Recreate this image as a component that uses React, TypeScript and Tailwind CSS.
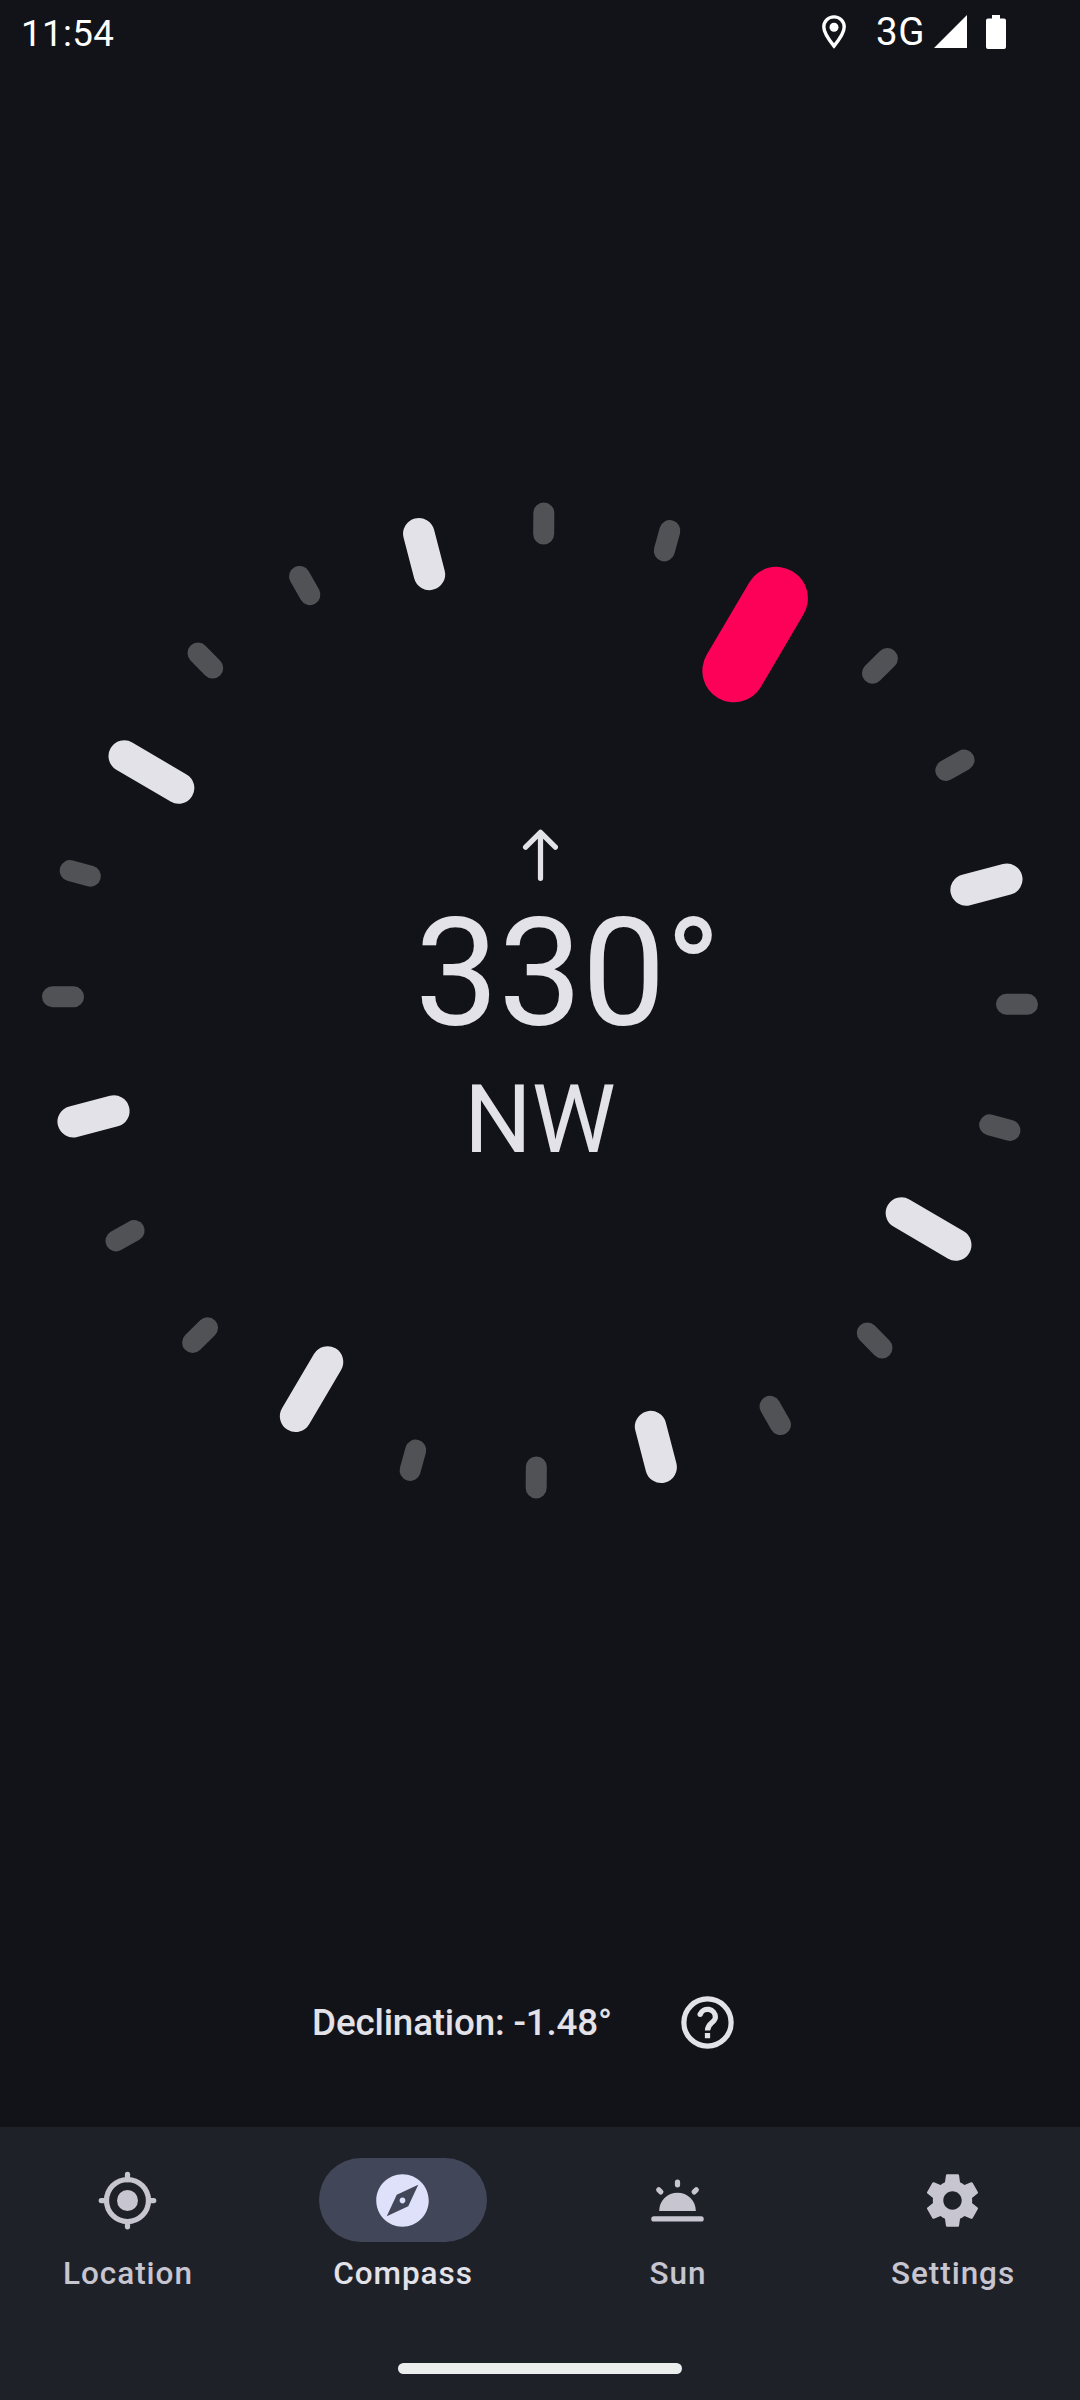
import type { ReactNode } from "react";

// 24 marks around the dial, every third one is a compass point
const HEADING_OFFSET = 30.45;
const marks = Array.from({ length: 24 }, (_, i) => {
  const angle = HEADING_OFFSET + i * 15;
  if (i === 0) return { angle, width: 63, height: 147, fill: "#fd0058" };
  if (i % 6 === 0) return { angle, width: 31.5, height: 94.5, fill: "#e3e2e9" };
  if (i % 3 === 0) return { angle, width: 31.5, height: 73.5, fill: "#e3e2e9" };
  return { angle, width: 21, height: 42, fill: "#515256" };
});

const tabs: { label: string; icon: ReactNode; active?: boolean }[] = [
  {
    label: "Location",
    icon: (
      <>
        <circle cx="12" cy="12" r="4" />
        <circle cx="12" cy="12" r="8" fill="none" stroke="currentColor" strokeWidth="2" />
        <path
          d="M12 2v2M12 20v2M2 12h2M20 12h2"
          stroke="currentColor"
          strokeWidth="2"
          strokeLinecap="round"
        />
      </>
    ),
  },
  {
    label: "Compass",
    active: true,
    icon: (
      <path d="M12 10.9c-.61 0-1.1.49-1.1 1.1s.49 1.1 1.1 1.1c.61 0 1.1-.49 1.1-1.1s-.49-1.1-1.1-1.1zM12 2C6.48 2 2 6.48 2 12s4.48 10 10 10 10-4.48 10-10S17.52 2 12 2zm2.19 12.19L6 18l3.81-8.19L18 6l-3.81 8.19z" />
    ),
  },
  {
    label: "Sun",
    icon: (
      <>
        <path d="M5 16a7 7 0 0 1 14 0z" />
        <path
          d="M3 19h18M12 5v1M4.85 7.95l.8.8M19.15 7.95l-.8.8"
          stroke="currentColor"
          strokeWidth="2"
          strokeLinecap="round"
        />
      </>
    ),
  },
  {
    label: "Settings",
    icon: (
      <path d="M19.43 12.98c.04-.32.07-.64.07-.98s-.03-.66-.07-.98l2.11-1.65c.19-.15.24-.42.12-.64l-2-3.46c-.12-.22-.39-.3-.61-.22l-2.49 1c-.52-.4-1.08-.73-1.69-.98l-.38-2.65C14.46 2.18 14.25 2 14 2h-4c-.25 0-.46.18-.49.42l-.38 2.65c-.61.25-1.17.59-1.69.98l-2.49-1c-.23-.09-.49 0-.61.22l-2 3.46c-.13.22-.07.49.12.64l2.11 1.65c-.04.32-.07.65-.07.98s.03.66.07.98l-2.11 1.65c-.19.15-.24.42-.12.64l2 3.46c.12.22.39.3.61.22l2.49-1c.52.4 1.08.73 1.69.98l.38 2.65c.03.24.24.42.49.42h4c.25 0 .46-.18.49-.42l.38-2.65c.61-.25 1.17-.59 1.69-.98l2.49 1c.23.09.49 0 .61-.22l2-3.46c.12-.22.07-.49-.12-.64l-2.11-1.65zM12 15.5c-1.93 0-3.5-1.57-3.5-3.5s1.57-3.5 3.5-3.5 3.5 1.57 3.5 3.5-1.57 3.5-3.5 3.5z" />
    ),
  },
];

function StatusBar() {
  return (
    <header className="flex h-[63px] items-center justify-between pl-[21px] pr-[74px] text-white">
      <span className="pt-[3px] text-[36.75px] leading-[43px] tracking-[0.35px]">11:54</span>
      <div className="flex items-center">
        <svg className="mr-[29px] h-[34px] w-[26px]" viewBox="0 0 26 34">
          <path
            d="M13 1.9c6 0 10.2 4.6 10.2 10.2 0 5.2-3.6 11-10.2 19-6.6-8-10.2-13.8-10.2-19C2.8 6.5 7 1.9 13 1.9z"
            fill="none"
            stroke="currentColor"
            strokeWidth="3.4"
          />
          <circle cx="13" cy="12.3" r="4.5" fill="currentColor" />
        </svg>
        <span className="text-[38.5px] leading-[43px] tracking-[0.6px]">3G</span>
        <svg className="ml-[9px] h-[33px] w-[33px]" viewBox="0 0 33 33" fill="currentColor">
          <path d="M33 0v33H0z" />
        </svg>
        <svg className="ml-[19px] h-[34px] w-[20px]" viewBox="0 0 20 34" fill="currentColor">
          <path d="M6 0h8v3.5h4a2 2 0 0 1 2 2V32a2 2 0 0 1-2 2H2a2 2 0 0 1-2-2V5.500a2 2 0 0 1 2-2h4z" />
        </svg>
      </div>
    </header>
  );
}

function Dial() {
  return (
    <div className="grid h-[996px] w-[996px] place-items-center">
      <svg
        className="col-start-1 row-start-1 h-[996px] w-[996px] overflow-visible"
        viewBox="-498 -498.5 996 996"
      >
        {marks.map((m) => (
          <rect
            key={m.angle}
            x={-m.width / 2}
            y={-498}
            width={m.width}
            height={m.height}
            rx={m.width / 2}
            fill={m.fill}
            transform={`rotate(${m.angle})`}
          />
        ))}
      </svg>
      <div className="col-start-1 row-start-1 flex translate-y-[3px] flex-col items-center text-[#e3e2e9]">
        <svg
          className="h-[52px] w-[36px]"
          viewBox="0 0 36 52"
          fill="none"
          stroke="currentColor"
          strokeWidth="5.25"
          strokeLinecap="round"
          strokeLinejoin="round"
        >
          <path d="M18.5 49.3V3.500M3.600 18.200L18.5 3.300l14.900 14.900" />
        </svg>
        <div className="relative mt-[9px] text-[149.6px] leading-[168px] tracking-[-0.5px]">
          330
          <span className="absolute left-full top-0">°</span>
        </div>
        <div className="mt-1 text-[94.5px] leading-[116px]">NW</div>
      </div>
    </div>
  );
}

function BottomNav() {
  return (
    <nav className="flex h-[273px] flex-col items-center bg-[#1f2129]">
      <div className="flex w-full gap-[21px] pl-px pt-[31px]">
        {tabs.map((tab) => (
          <button
            key={tab.label}
            className={
              tab.active
                ? "flex flex-1 flex-col items-center text-[#e3e2e9]"
                : "flex flex-1 flex-col items-center text-[#c6c5d0]"
            }
          >
            <span
              className={
                tab.active
                  ? "grid h-[84px] w-[168px] place-items-center rounded-full bg-[#424659] pr-[2px] text-[#dee1f9]"
                  : "grid h-[84px] w-[168px] place-items-center rounded-full pr-[2px]"
              }
            >
              <svg className="h-[63px] w-[63px]" viewBox="0 0 24 24" fill="currentColor">
                {tab.icon}
              </svg>
            </span>
            <span className="mt-[11px] text-[31.5px] font-medium leading-[42px] tracking-[0.95px]">
              {tab.label}
            </span>
          </button>
        ))}
      </div>
      <div className="mb-[26px] mt-auto h-[11px] w-[284px] rounded-full bg-[#eceeed]" />
    </nav>
  );
}

export default function App() {
  return (
    <div className="flex h-[2400px] w-[1080px] flex-col overflow-hidden bg-[#121318] font-['Roboto',sans-serif]">
      <StatusBar />
      <main className="flex flex-1 flex-col items-center">
        <div className="mt-[439px]">
          <Dial />
        </div>
        <div className="mb-[73px] mt-auto flex items-center gap-[64px] pr-[29px]">
          <span className="text-[36.75px] font-medium leading-[52px] tracking-[-0.17px] text-[#e3e2e9]">
            Declination: -1.48°
          </span>
          <svg
            className="h-[63px] w-[63px] text-[#e3e2e9]"
            viewBox="0 0 24 24"
            fill="none"
            stroke="currentColor"
            strokeWidth="2"
          >
            <circle cx="12" cy="12" r="9" />
            <path d="M9.2 8.9A3 3 0 0 1 15 10c0 2-3 2.1-3 5M12 16v2" />
            <circle cx="9.2" cy="8.9" r="1" fill="currentColor" stroke="none" />
          </svg>
        </div>
      </main>
      <BottomNav />
    </div>
  );
}
